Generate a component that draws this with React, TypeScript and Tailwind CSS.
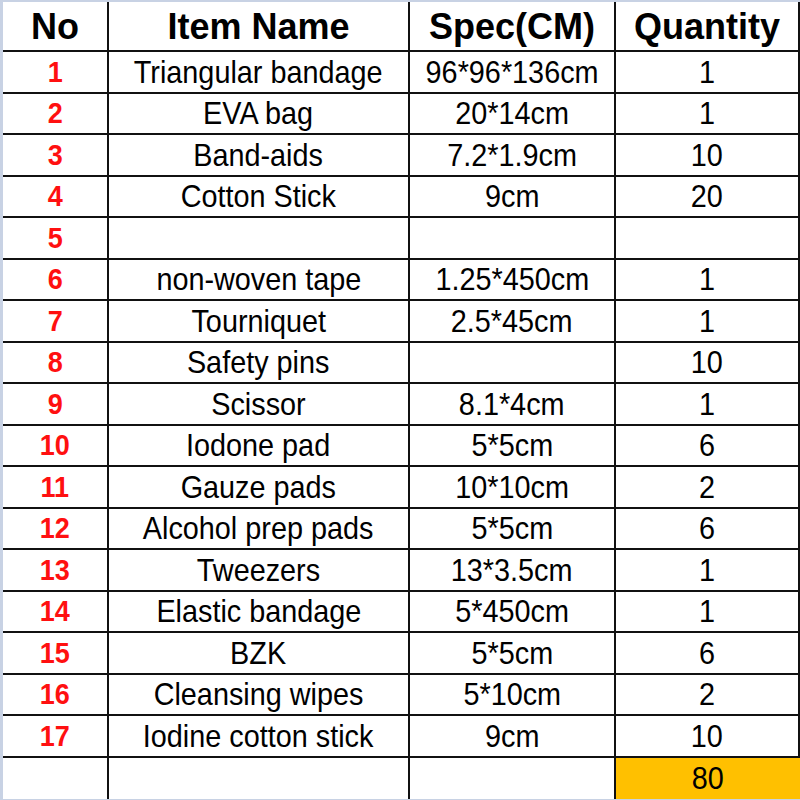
import React from "react";

const rows: [string, string, string, string][] = [
  ["1", "Triangular bandage", "96*96*136cm", "1"],
  ["2", "EVA bag", "20*14cm", "1"],
  ["3", "Band-aids", "7.2*1.9cm", "10"],
  ["4", "Cotton Stick", "9cm", "20"],
  ["5", "", "", ""],
  ["6", "non-woven tape", "1.25*450cm", "1"],
  ["7", "Tourniquet", "2.5*45cm", "1"],
  ["8", "Safety pins", "", "10"],
  ["9", "Scissor", "8.1*4cm", "1"],
  ["10", "Iodone pad", "5*5cm", "6"],
  ["11", "Gauze pads", "10*10cm", "2"],
  ["12", "Alcohol prep pads", "5*5cm", "6"],
  ["13", "Tweezers", "13*3.5cm", "1"],
  ["14", "Elastic bandage", "5*450cm", "1"],
  ["15", "BZK", "5*5cm", "6"],
  ["16", "Cleansing wipes", "5*10cm", "2"],
  ["17", "Iodine cotton stick", "9cm", "10"],
];

function Txt({ children, red }: { children: React.ReactNode; red?: boolean }) {
  return (
    <span
      className={
        red
          ? "inline-block whitespace-nowrap text-[30px] font-bold leading-none text-[#ff1010] [transform:scaleX(0.9)]"
          : "inline-block whitespace-nowrap text-[32px] leading-none text-black [transform:scaleX(0.9)]"
      }
    >
      {children}
    </span>
  );
}

const cell = "flex items-center justify-center border-b-2 border-r-2 border-[#111]";
const lastCell = "flex items-center justify-center border-r-2 border-[#111]";

export default function App() {
  return (
    <div
      className="h-[800px] w-[800px] overflow-hidden border-l-[3px] border-t-2 border-b border-[#c8d2e4] bg-white"
      style={{ fontFamily: '"Liberation Sans", Arial, sans-serif' }}
    >
      <div className="grid h-full grid-cols-[106px_301px_206px_184px] grid-rows-[50px_repeat(18,1fr)]">
        {["No", "Item Name", "Spec(CM)", "Quantity"].map((h) => (
          <div key={h} className={cell}>
            <span className="pt-[2px] text-[36px] font-bold leading-none text-black">{h}</span>
          </div>
        ))}
        {rows.map((r) => (
          <React.Fragment key={r[0]}>
            <div className={cell}>
              <Txt red>{r[0]}</Txt>
            </div>
            <div className={cell}>
              <Txt>{r[1]}</Txt>
            </div>
            <div className={cell}>
              <Txt>{r[2]}</Txt>
            </div>
            <div className={cell}>
              <Txt>{r[3]}</Txt>
            </div>
          </React.Fragment>
        ))}
        <div className={lastCell}></div>
        <div className={lastCell}></div>
        <div className={lastCell}></div>
        <div className="flex items-center justify-center bg-[#ffc000]">
          <Txt>80</Txt>
        </div>
      </div>
    </div>
  );
}
